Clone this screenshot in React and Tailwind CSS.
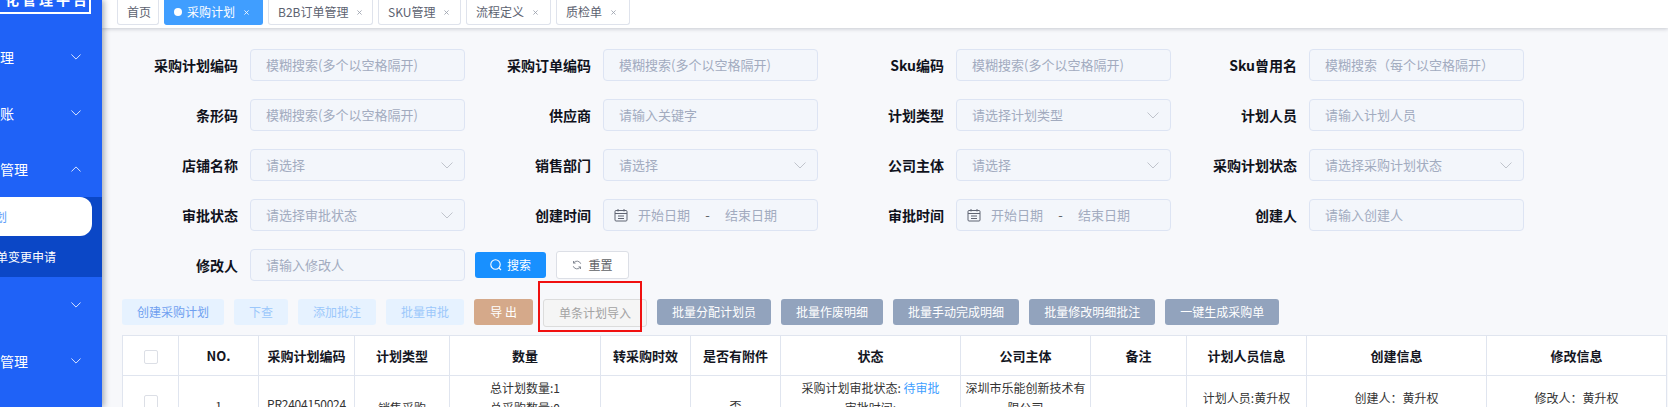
import React from "react";

const tabs = [
  { name: "首页", closable: false, w: "w-[42px]" },
  { name: "采购计划", active: true, closable: true, w: "w-[99px]" },
  { name: "B2B订单管理", closable: true, w: "w-[105px]" },
  { name: "SKU管理", closable: true, w: "w-[83px]" },
  { name: "流程定义", closable: true, w: "w-[85px]" },
  { name: "质检单", closable: true, w: "w-[74px]" },
];

const fuzzy = "模糊搜索(多个以空格隔开)";

const fields = [
  { label: "采购计划编码", text: fuzzy },
  { label: "采购订单编码", text: fuzzy },
  { label: "Sku编码", text: fuzzy },
  { label: "Sku曾用名", text: "模糊搜索（每个以空格隔开）" },
  { label: "条形码", text: fuzzy },
  { label: "供应商", text: "请输入关键字" },
  { label: "计划类型", text: "请选择计划类型", select: true },
  { label: "计划人员", text: "请输入计划人员" },
  { label: "店铺名称", text: "请选择", select: true },
  { label: "销售部门", text: "请选择", select: true },
  { label: "公司主体", text: "请选择", select: true },
  { label: "采购计划状态", text: "请选择采购计划状态", select: true },
  { label: "审批状态", text: "请选择审批状态", select: true },
  { label: "创建时间", date: true },
  { label: "审批时间", date: true },
  { label: "创建人", text: "请输入创建人" },
];

const lightButtons = [
  { name: "创建采购计划", cls: "text-[#6f9ff0]" },
  { name: "下查", cls: "text-[#9cc8fb]" },
  { name: "添加批注", cls: "text-[#9cc8fb]" },
  { name: "批量审批", cls: "text-[#9cc8fb]" },
];

const slateButtons = ["批量分配计划员", "批量作废明细", "批量手动完成明细", "批量修改明细批注", "一键生成采购单"];

const columns = [
  { w: "w-[56px]", name: "" },
  { w: "w-[80px]", name: "NO." },
  { w: "w-[96px]", name: "采购计划编码" },
  { w: "w-[95px]", name: "计划类型" },
  { w: "w-[151px]", name: "数量" },
  { w: "w-[90px]", name: "转采购时效" },
  { w: "w-[90px]", name: "是否有附件" },
  { w: "w-[180px]", name: "状态" },
  { w: "w-[130px]", name: "公司主体" },
  { w: "w-[96px]", name: "备注" },
  { w: "w-[120px]", name: "计划人员信息" },
  { w: "w-[180px]", name: "创建信息" },
  { w: "w-[180px]", name: "修改信息" },
];

function Chevron({ up, className }) {
  return (
    <svg viewBox="0 0 12 7" fill="none" stroke="currentColor" strokeWidth="1" className={className}>
      <polyline points={up ? "0.5,6.5 6,1 11.5,6.5" : "0.5,0.5 6,6 11.5,0.5"} />
    </svg>
  );
}

function CalendarIcon() {
  return (
    <svg viewBox="0 0 14 14" fill="none" stroke="#5f6472" strokeWidth="1" className="w-[14px] h-[14px] shrink-0">
      <rect x="1" y="2.5" width="12" height="10.5" rx="1" />
      <path d="M1 5.5h12M4 1v2.5M10 1v2.5M4 8h6M4 10.5h6" />
    </svg>
  );
}

function Checkbox() {
  return <span className="inline-block w-[14px] h-[14px] bg-white border border-[#dcdfe6] rounded-[2px] align-middle" />;
}

function Field({ label, text, select, date }) {
  return (
    <div className="flex items-center gap-[12px]">
      <label className="w-[118px] text-right text-[14px] font-bold text-[#10121c] whitespace-nowrap">{label}</label>
      <div className="w-[215px] h-[32px] flex items-center bg-[#f3f6fb] border border-[#dde4f3] rounded-[4px] text-[13px] text-[#a2abbf] whitespace-nowrap">
        {date ? (
          <div className="flex items-center pl-[10px]">
            <CalendarIcon />
            <span className="ml-[10px] w-[52px]">开始日期</span>
            <span className="w-[35px] text-center text-[#606266]">-</span>
            <span className="w-[52px]">结束日期</span>
          </div>
        ) : (
          <span className="pl-[15px] flex-1">{text}</span>
        )}
        {select && <Chevron className="w-[12px] h-[7px] mr-[11px] text-[#c0c4cc]" />}
      </div>
    </div>
  );
}

function Sidebar() {
  return (
    <aside className="relative z-10 w-[102px] shrink-0 h-full bg-[#1f62f7] text-white text-[14px] shadow-[2px_0_6px_rgba(0,21,41,0.35)] overflow-hidden">
      <div className="h-[14px] w-[91px] border-b-2 border-r-2 border-white overflow-hidden">
        <div className="-mt-[11px] pl-[5px] text-[14px] leading-[20px] font-bold tracking-[3px] whitespace-nowrap">化管理平台</div>
      </div>
      <div className="mt-[15px]">
        <div className="h-[56px] flex items-center justify-between pr-[21px]">
          <span>理</span>
          <Chevron className="w-[10px] h-[6px]" />
        </div>
        <div className="h-[56px] flex items-center justify-between pr-[21px]">
          <span>账</span>
          <Chevron className="w-[10px] h-[6px]" />
        </div>
        <div className="h-[56px] flex items-center justify-between pr-[21px]">
          <span>管理</span>
          <Chevron up className="w-[10px] h-[6px]" />
        </div>
        <div className="bg-[#0b47c6] text-[12px]">
          <div className="h-[39px] w-[92px] flex items-center bg-white text-[#5b9dfa] rounded-r-[12px]">
            <span className="-ml-[5px]">划</span>
          </div>
          <div className="h-[41px] flex items-center whitespace-nowrap">
            <span className="-ml-[4px]">单变更申请</span>
          </div>
        </div>
        <div className="h-[56px] flex items-center justify-end pr-[21px]">
          <Chevron className="w-[10px] h-[6px]" />
        </div>
        <div className="h-[56px] flex items-center justify-between pr-[21px]">
          <span>管理</span>
          <Chevron className="w-[10px] h-[6px]" />
        </div>
      </div>
    </aside>
  );
}

function TabBar() {
  return (
    <div className="relative z-[5] h-[28px] bg-white shadow-[0_1px_4px_rgba(0,21,41,0.2)] flex gap-[5px] pl-[15px] text-[12px]">
      {tabs.map((t) => (
        <div
          key={t.name}
          className={
            "h-[25px] flex items-center pl-[9px] rounded-b-[3px] border-x border-b whitespace-nowrap " +
            t.w +
            (t.active ? " bg-[#409eff] border-[#409eff] text-white" : " bg-white border-[#dfe3ec] text-[#5c6270]")
          }
        >
          {t.active && <span className="w-[8px] h-[8px] rounded-full bg-white mr-[5px] shrink-0" />}
          <span>{t.name}</span>
          {t.closable && (
            <svg viewBox="0 0 6 6" stroke="currentColor" strokeWidth="1" className={"w-[5px] h-[5px] ml-[9px] " + (t.active ? "text-white" : "text-[#9aa0ac]")}>
              <path d="M0.5 0.5l5 5M5.5 0.5l-5 5" />
            </svg>
          )}
        </div>
      ))}
    </div>
  );
}

function Toolbar() {
  return (
    <div className="relative flex items-start gap-[10px] mt-[18px] ml-[20px] text-[12px] whitespace-nowrap">
      {lightButtons.map((b) => (
        <button key={b.name} className={"h-[26px] px-[15px] rounded-[3px] bg-[#e6f2ff] " + b.cls}>{b.name}</button>
      ))}
      <button className="h-[26px] w-[59px] rounded-[3px] bg-[#d5a98a] text-white">导 出</button>
      <button className="h-[28px] px-[15px] rounded-[3px] bg-[#f5f5f5] border border-[#dcdcdc] text-[#a3a3a3]">单条计划导入</button>
      {slateButtons.map((b) => (
        <button key={b} className="h-[26px] px-[15px] rounded-[3px] bg-[#92a3bd] text-white">{b}</button>
      ))}
      {/* red annotation box drawn over the screenshot */}
      <div className="absolute left-[416px] -top-[18px] w-[104px] h-[51px] border-2 border-[#f01010] pointer-events-none" />
    </div>
  );
}

function DataTable() {
  const cell = "border border-[#e0e5ef] text-center align-middle";
  return (
    <div className="mt-[8px] ml-[20px] w-[1545px]">
      <table className="table-fixed w-[1544px] border-collapse bg-white text-[12px] leading-[20px] text-[#333]">
        <colgroup>
          {columns.map((c, i) => <col key={i} className={c.w} />)}
        </colgroup>
        <thead>
          <tr className="h-[40px]">
            <th className={cell}><Checkbox /></th>
            {columns.slice(1).map((c) => (
              <th key={c.name} className={cell + " text-[13px] font-bold text-[#14161f]"}>{c.name}</th>
            ))}
          </tr>
        </thead>
        <tbody>
          <tr className="h-[64px]">
            <td className={cell}><span className="relative -top-[7px]"><Checkbox /></span></td>
            <td className={cell + " pb-[3px]"}>1</td>
            <td className={cell + " pb-[7px] tracking-[-0.25px]"}>PR2404150024</td>
            <td className={cell}>销售采购</td>
            <td className={cell}>
              <div>总计划数量:1</div>
              <div>总采购数量:0</div>
              <div>总入库数量:0</div>
            </td>
            <td className={cell} />
            <td className={cell + " pb-[3px]"}>否</td>
            <td className={cell}>
              <div>采购计划审批状态: <span className="text-[#409eff]">待审批</span></div>
              <div>审批时间:</div>
              <div>审批人:</div>
            </td>
            <td className={cell + " px-[4px] pb-[20px]"}>深圳市乐能创新技术有限公司</td>
            <td className={cell} />
            <td className={cell}>
              <div>计划人员:黄升权</div>
              <div>采购人员:黄升权</div>
            </td>
            <td className={cell}>
              <div>创建人：黄升权</div>
              <div>创建时间:</div>
            </td>
            <td className={cell}>
              <div>修改人：黄升权</div>
              <div>修改时间:</div>
            </td>
          </tr>
        </tbody>
      </table>
    </div>
  );
}

export default function App() {
  return (
    <div className="flex w-[1668px] h-[407px] overflow-hidden bg-[#f7f8fb] font-['Noto_Sans_CJK_SC','Liberation_Sans',sans-serif]">
      <Sidebar />
      <main className="flex-1 min-w-0">
        <TabBar />
        <div className="mt-[21px] pl-[18px] grid grid-cols-[repeat(4,353px)] gap-y-[18px]">
          {fields.map((f) => <Field key={f.label} {...f} />)}
          <div className="col-span-4 flex items-center">
            <Field label="修改人" text="请输入修改人" />
            <button className="ml-[10px] h-[26px] w-[71px] flex items-center justify-center gap-[5px] rounded-[3px] bg-[#1890ff] text-white text-[12px]">
              <svg viewBox="0 0 12 12" fill="none" stroke="currentColor" strokeWidth="1.1" className="w-[12px] h-[12px]">
                <circle cx="5.5" cy="5.5" r="4.7" />
                <path d="M9 9l2 2" />
              </svg>
              搜索
            </button>
            <button className="ml-[10px] h-[28px] w-[73px] flex items-center justify-center gap-[6px] rounded-[3px] bg-white border border-[#dcdfe6] text-[#606266] text-[12px]">
              <svg viewBox="0 0 12 12" fill="none" stroke="#7a7f8a" strokeWidth="1.1" className="w-[10px] h-[10px]">
                <path d="M10.5 4.5A4.8 4.8 0 0 0 2 3.5M1.5 7.5A4.8 4.8 0 0 0 10 8.5" />
                <path d="M1.8 1.2v2.5h2.5M10.2 10.8V8.3H7.7" />
              </svg>
              重置
            </button>
          </div>
        </div>
        <Toolbar />
        <DataTable />
      </main>
    </div>
  );
}
